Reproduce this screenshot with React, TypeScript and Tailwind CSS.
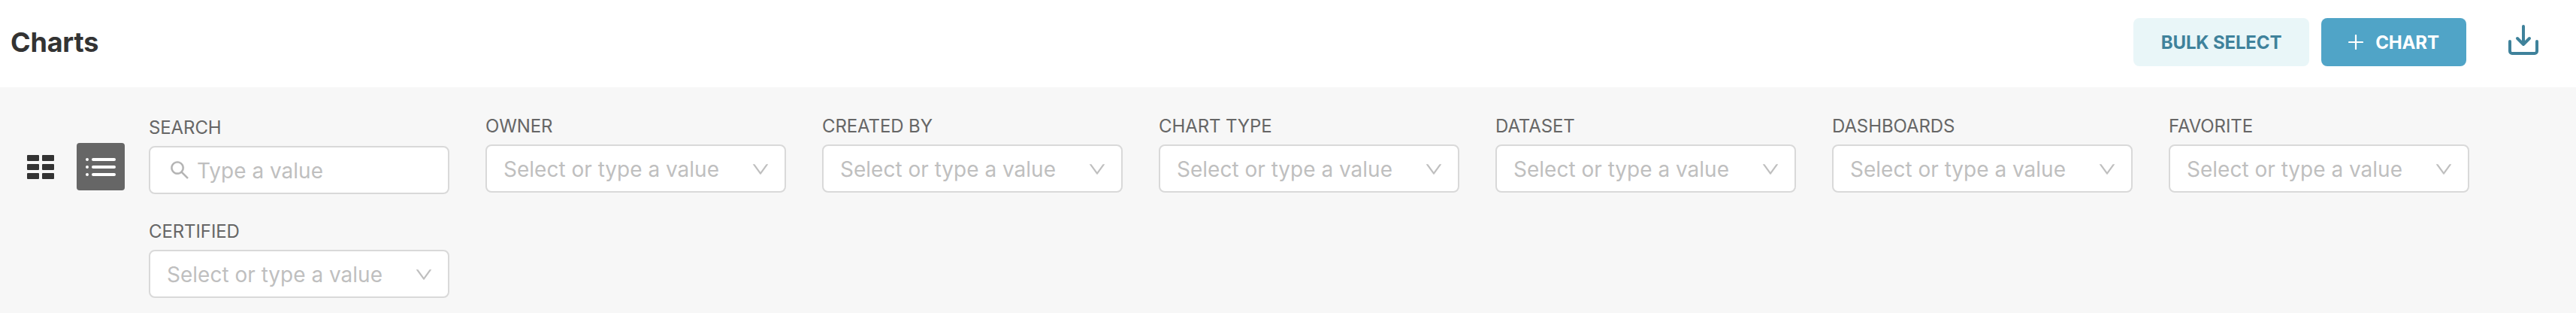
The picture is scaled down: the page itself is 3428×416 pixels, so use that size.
const DOWN =
  'M884 256h-75c-5.1 0-9.9 2.5-12.9 6.6L512 654.2 227.9 262.6c-3-4.1-7.8-6.6-12.9-6.6h-75c-6.5 0-10.3 7.4-6.5 12.7l352.6 486.1c12.8 17.6 39 17.6 51.7 0l352.6-486.1c3.9-5.3.1-12.7-6.4-12.7z';
const SEARCH =
  'M909.6 854.5L649.9 594.8C690.2 542.7 712 479 712 412c0-80.2-31.3-155.4-87.9-212.1-56.6-56.7-132-87.9-212.1-87.9s-155.5 31.3-212.1 87.9C143.2 256.5 112 331.8 112 412c0 80.1 31.3 155.5 87.9 212.1C256.5 680.8 331.8 712 412 712c67 0 130.6-21.8 182.7-62l259.7 259.6a8.2 8.2 0 0011.6 0l43.6-43.5a8.2 8.2 0 000-11.6zM570.4 570.4C528 612.7 471.8 636 412 636s-116-23.3-158.4-65.6C211.3 528 188 471.8 188 412s23.3-116.1 65.6-158.4C296 211.3 352.2 188 412 188s116.1 23.2 158.4 65.6S636 352.2 636 412s-23.3 116.1-65.6 158.4z';

function Label({ children }: { children: string }) {
  return (
    <div className="pt-px text-[24px] leading-8 font-[430] tracking-[-0.1px] whitespace-nowrap text-[#666666]">
      {children}
    </div>
  );
}

function SearchFilter() {
  return (
    <div className="w-[400px] pt-0.5">
      <Label>SEARCH</Label>
      <div className="mt-2 flex h-16 items-center rounded-lg border-2 border-[#d9d9d9] bg-white pl-[26px]">
        <svg viewBox="64 64 896 896" className="h-[26px] w-[26px] fill-[#b2b2b2]" stroke="#b2b2b2" strokeWidth="12">
          <path d={SEARCH} />
        </svg>
        <span className="ml-2.5 pt-0.5 text-[28px] leading-9 text-[#bfbfbf]">Type a value</span>
      </div>
    </div>
  );
}

function SelectFilter({ label }: { label: string }) {
  return (
    <div className="w-[400px]">
      <Label>{label}</Label>
      <div className="mt-2 flex h-16 items-center justify-between rounded-lg border-2 border-[#d9d9d9] bg-white pr-5 pl-[22px]">
        <span className="pt-0.5 text-[28px] leading-9 whitespace-nowrap text-[#bfbfbf]">Select or type a value</span>
        <svg viewBox="64 64 896 896" className="mt-0.5 h-6 w-6 fill-[#bfbfbf]">
          <path d={DOWN} />
        </svg>
      </div>
    </div>
  );
}

const FILTERS = ['OWNER', 'CREATED BY', 'CHART TYPE', 'DATASET', 'DASHBOARDS', 'FAVORITE', 'CERTIFIED'];
const CELLS = [
  [0, 0],
  [20, 0],
  [0, 12],
  [20, 12],
  [0, 24],
  [20, 24],
];

export default function App() {
  return (
    <div className="h-[416px] w-[3428px] overflow-hidden bg-[#f7f7f7] font-['Inter',sans-serif]">
      <header className="flex h-[116px] items-center bg-white pr-[46px] pl-[14px]">
        <h1 className="mt-[-4px] flex-1 text-[36px] leading-[44px] font-bold tracking-[-0.2px] text-[#333333]">
          Charts
        </h1>
        <div className="mt-[-4px] flex items-center">
          <button className="h-16 w-[234px] rounded-lg bg-[#e9f6f8] pt-0.5 text-[24px] font-[650] tracking-[-0.15px] text-[#3f829b]">
            BULK SELECT
          </button>
          <button className="ml-4 flex h-16 w-[193px] items-center justify-center rounded-lg bg-[#50a4c7] text-[24px] font-[650] tracking-[-0.15px] text-white">
            <svg
              viewBox="0 0 20 20"
              className="mr-4 h-5 w-5"
              fill="none"
              stroke="currentColor"
              strokeWidth="2.2"
              strokeLinecap="round"
            >
              <path d="M10 1v18M1 10h18" />
            </svg>
            <span className="pt-0.5">CHART</span>
          </button>
          <svg
            viewBox="0 0 48 48"
            className="ml-[52px] h-12 w-12"
            fill="none"
            stroke="#3f829b"
            strokeWidth="4"
            strokeLinecap="round"
            strokeLinejoin="round"
          >
            <path d="M24 3v24M16 19l8 8 8-8M6 23v13a3 3 0 0 0 3 3h30a3 3 0 0 0 3-3V23" />
          </svg>
        </div>
      </header>
      <main className="flex pt-[35px]">
        <div className="mt-[39px] flex h-[63px] items-center pl-9">
          <svg viewBox="0 0 36 32" className="h-8 w-9 fill-[#333333]">
            {CELLS.map(([x, y]) => (
              <rect key={`${x}-${y}`} x={x} y={y} width="16" height="8" rx="1" />
            ))}
          </svg>
          <div className="ml-[30px] flex h-[63px] w-16 items-center justify-center rounded bg-[#666666]">
            <svg
              viewBox="0 0 40 24"
              className="h-6 w-10"
              fill="none"
              stroke="white"
              strokeWidth="4"
              strokeLinecap="round"
            >
              <path d="M2 2h0M10 2h28M2 12h0M10 12h28M2 22h0M10 22h28" />
            </svg>
          </div>
        </div>
        <div className="ml-8 flex w-[3140px] flex-wrap gap-x-12">
          <div className="h-[140px]">
            <SearchFilter />
          </div>
          {FILTERS.map((label) => (
            <div key={label} className="h-[140px]">
              <SelectFilter label={label} />
            </div>
          ))}
        </div>
      </main>
    </div>
  );
}
